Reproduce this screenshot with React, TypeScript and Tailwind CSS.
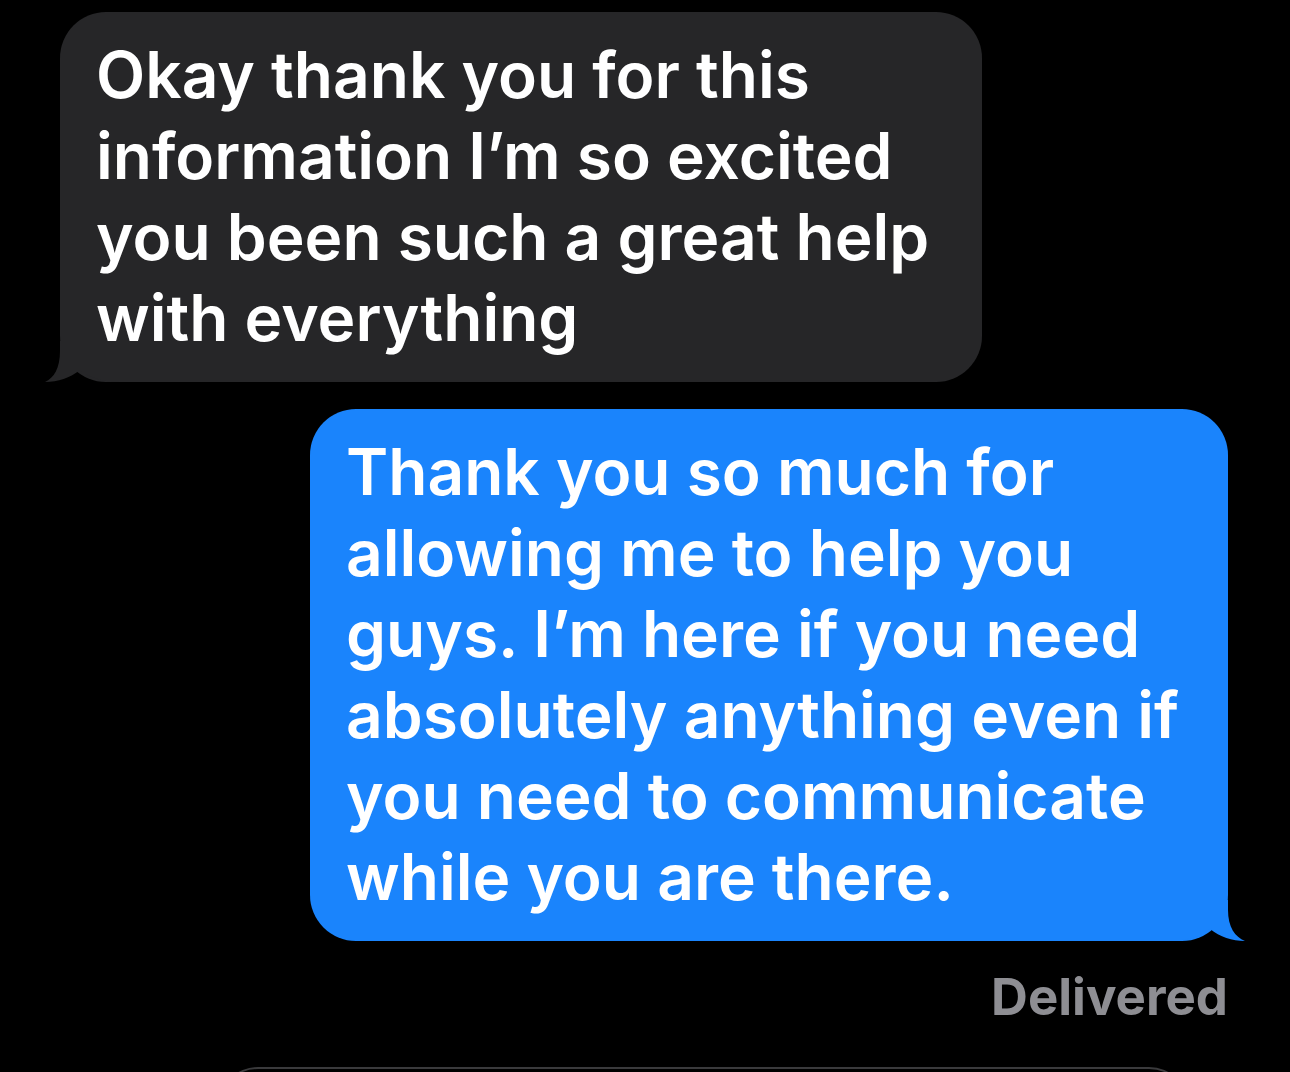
import React from "react";

const font = { fontFamily: "Inter, 'Noto Sans', sans-serif" };

function GrayTail() {
  return (
    <svg className="absolute -left-[15px] bottom-0" width="75" height="41" viewBox="0 0 75 41">
      <path d="M15 0 L15 10 C15 27 9 37 0 41 C13 41 25 37 35 29 C45 37 58 41 75 41 L75 0 Z" fill="#262628" />
    </svg>
  );
}

function BlueTail() {
  return (
    <svg className="absolute -right-[17px] bottom-0" width="77" height="41" viewBox="0 0 77 41">
      <path d="M60 0 L60 10 C60 27 67 37 77 41 C64 41 52 37 42 29 C32 37 18 41 0 41 L0 0 Z" fill="#1a84fc" />
    </svg>
  );
}

export default function App() {
  const grayLines = [
    "Okay thank you for this",
    "information I’m so excited",
    "you been such a great help",
    "with everything",
  ];
  const blueLines = [
    "Thank you so much for",
    "allowing me to help you",
    "guys. I’m here if you need",
    "absolutely anything even if",
    "you need to communicate",
    "while you are there.",
  ];

  return (
    <div className="h-[1072px] w-[1290px] overflow-hidden bg-black" style={font}>
      <div className="flex flex-col pt-[12px]">
        <div className="relative ml-[60px] w-[922px] rounded-[46px] bg-[#262628] pl-[36px] pt-[22px] pb-[24px]">
          {grayLines.map((l) => (
            <div key={l} className="text-[64px] font-semibold leading-[81px] tracking-[0px] text-white">
              {l}
            </div>
          ))}
          <GrayTail />
        </div>

        <div className="relative ml-[310px] mt-[27px] w-[918px] rounded-[46px] bg-[#1a84fc] pl-[36px] pt-[22px] pb-[24px]">
          {blueLines.map((l) => (
            <div key={l} className="text-[64px] font-semibold leading-[81px] tracking-[0px] text-white">
              {l}
            </div>
          ))}
          <BlueTail />
        </div>

        <div className="mt-[26px] pr-[62px] text-right text-[51px] font-bold leading-[60px] tracking-[0px] text-[#8e8e93]">
          Delivered
        </div>

        <div className="ml-[218px] mt-[40px] h-[80px] w-[971px] rounded-t-[40px] border-t-2 border-[#3a3a3c]" />
      </div>
    </div>
  );
}
